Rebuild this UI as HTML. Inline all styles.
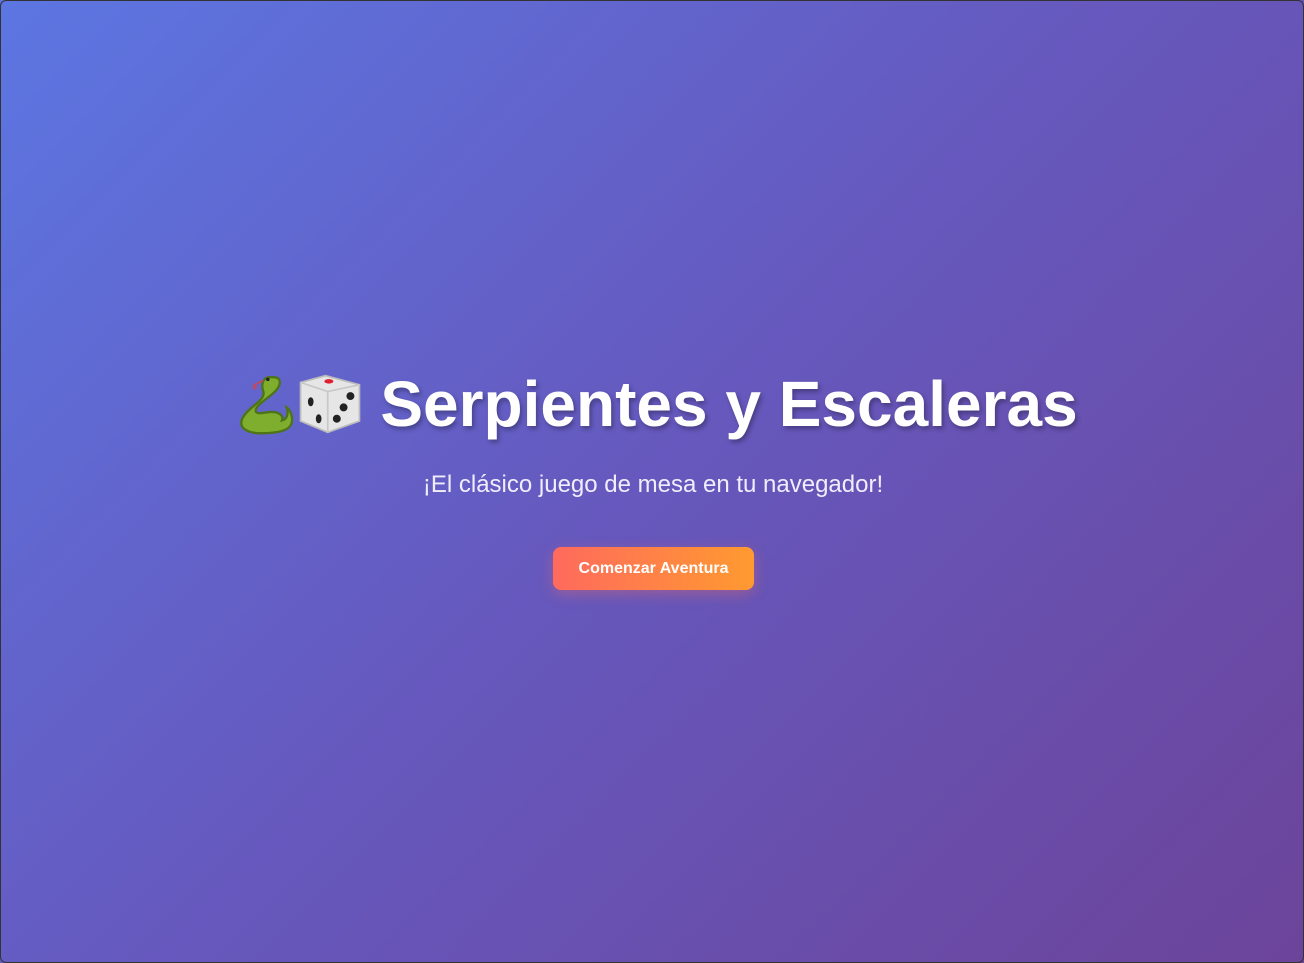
<!DOCTYPE html>
<html><head><meta charset="utf-8"><style>
html,body{margin:0;padding:0;width:1304px;height:963px;overflow:hidden}
body{background:linear-gradient(135deg,#5c76e2 0%,#6658bd 50%,#6c449a 100%);font-family:"Liberation Sans",sans-serif;color:#fff;position:relative;box-sizing:border-box;border:1px solid #333;border-radius:6px}
.title{position:absolute;top:366px;left:0;width:1304px;text-align:center;white-space:nowrap}
.title h1{display:inline-flex;align-items:center;margin:0;font-size:64px;font-weight:bold;text-shadow:2px 3px 5px rgba(0,0,0,.3)}
.title svg{flex-shrink:0}
.sub{position:absolute;top:470px;width:1304px;text-align:center;font-size:24px;color:#f0eefc}
.btn{position:absolute;left:552px;top:546px;width:201px;height:43px;border-radius:8px;background:linear-gradient(90deg,#ff6a5d,#ff9a30);font-weight:bold;font-size:16px;line-height:43px;text-align:center;box-shadow:0 4px 14px rgba(255,110,90,.35)}
</style></head><body>
<div class="title"><h1>
<svg width="68" height="68" viewBox="4 4 58 58"><path d="M40 10c-6 0-8 6-6 12 3 8-14 14-18 24-3 7 4 12 16 12 14 0 24-2 26-8 2-6-1-12-4-14 2 6 0 10-4 11 2-5-4-8-12-7-6 1-12 2-10-3 3-7 22-14 20-24-1-3-4-3-8-3z" fill="#7fae2e" stroke="#4d7417" stroke-width="2"/><path d="M34 13l-8 4 2 2-3 1" stroke="#c4475a" stroke-width="1.5" fill="none"/><circle cx="38" cy="12" r="1.5" fill="#222"/></svg>
<svg width="68" height="68" viewBox="4 6 60 58" style="margin-right:16px"><path d="M8 16l22-6 30 8v32l-28 10-24-10z" fill="#e6e6e6" stroke="#bbb" stroke-width="1.5"/><path d="M8 16l24 8 28-6M32 24v36" stroke="#c8c8c8" stroke-width="1.5" fill="none"/><ellipse cx="33" cy="15" rx="4" ry="2" fill="#e02030"/><ellipse cx="17" cy="33" rx="2.5" ry="4" fill="#222"/><ellipse cx="24" cy="48" rx="2.5" ry="4" fill="#222"/><circle cx="52" cy="28" r="3.5" fill="#222"/><circle cx="46" cy="38" r="3.5" fill="#222"/><circle cx="40" cy="48" r="3.5" fill="#222"/></svg>
Serpientes y Escaleras</h1></div>
<div class="sub">¡El clásico juego de mesa en tu navegador!</div>
<div class="btn">Comenzar Aventura</div>
</body></html>
